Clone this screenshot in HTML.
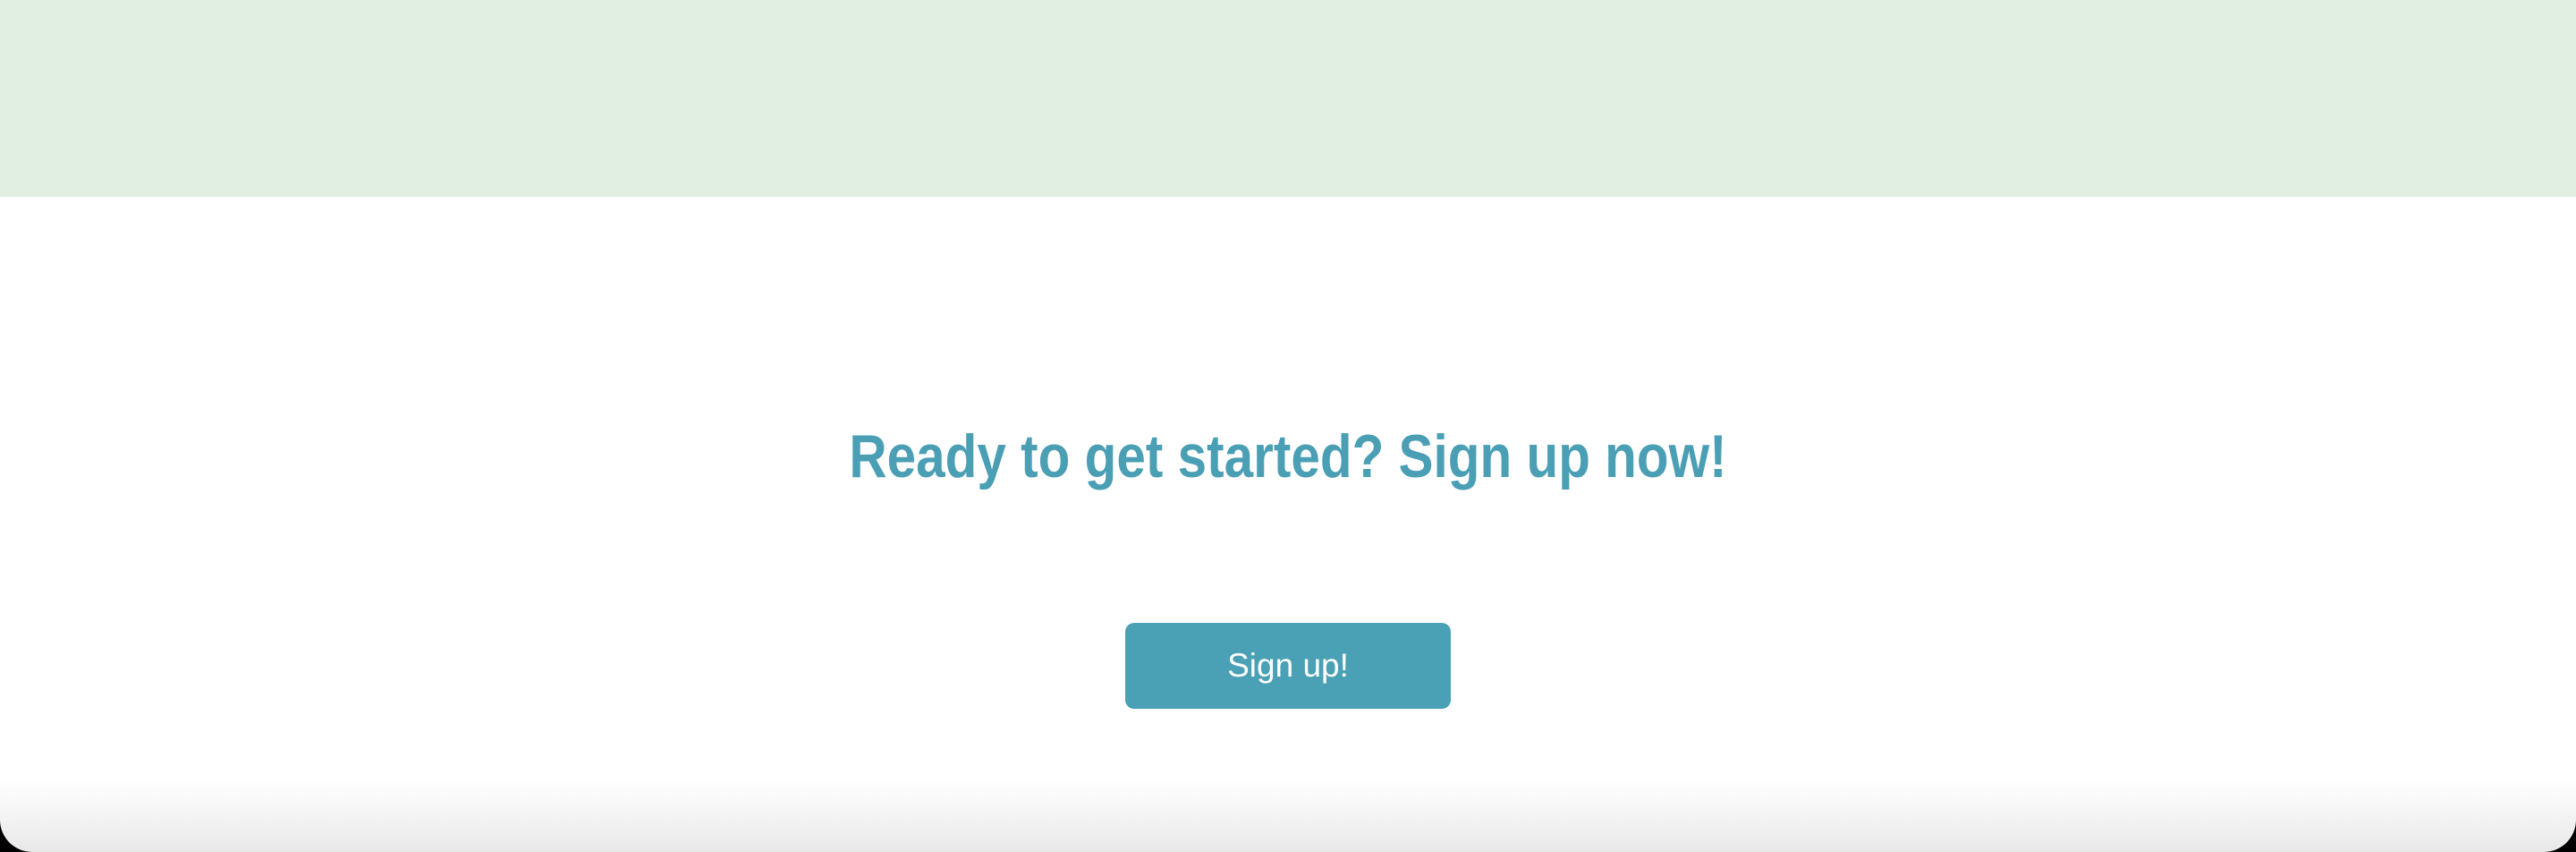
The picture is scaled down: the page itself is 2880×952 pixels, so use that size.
<!DOCTYPE html>
<html><head><style>
html,body{margin:0;padding:0;width:2880px;height:952px;overflow:hidden;background:#000;}
.card{position:absolute;left:0;top:0;width:2880px;height:952px;background:#fff;border-radius:0 0 36px 36px;overflow:hidden;}
.band{position:absolute;left:0;top:0;width:2880px;height:220px;background:#e1efe2;}
.shade{position:absolute;left:0;bottom:0;width:2880px;height:80px;background:linear-gradient(to bottom,rgba(0,0,0,0),rgba(0,0,0,0.09));}
h1{position:absolute;left:0;width:2880px;top:470px;margin:0;text-align:center;font:bold 68px "Liberation Sans",sans-serif;color:#4a9fb5;line-height:80px;transform:scaleX(0.86);transform-origin:1440px 0;}
.btn{position:absolute;left:1258px;top:696px;width:364px;height:96px;background:#4aa0b5;border-radius:10px;color:#fff;font:37px "Liberation Sans",sans-serif;line-height:96px;text-align:center;}
</style></head><body>
<div class="card">
<div class="band"></div>
<div class="shade"></div>
<h1>Ready to get started? Sign up now!</h1>
<div class="btn">Sign up!</div>
</div>
</body></html>
